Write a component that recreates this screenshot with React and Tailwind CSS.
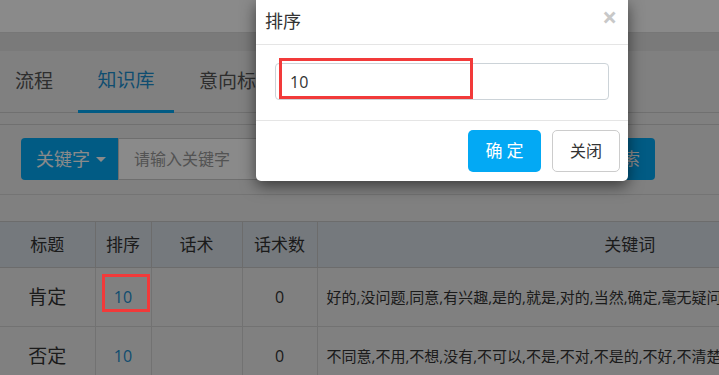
import React from 'react'

const cjk = { fontFamily: '"Open Sans", "Noto Sans CJK SC", sans-serif' }

const rows = [
  {
    title: '肯定',
    sort: 10,
    count: 0,
    words: '好的,没问题,同意,有兴趣,是的,就是,对的,当然,确定,毫无疑问,可以'
  },
  {
    title: '否定',
    sort: 10,
    count: 0,
    words: '不同意,不用,不想,没有,不可以,不是,不对,不是的,不好,不清楚,不需要'
  }
]

function Page() {
  return (
    <div className="w-[719px] h-[375px] bg-[#ededed] text-[#333]">
      <div className="h-[33px] bg-white border-b border-[#dcdcdc]" />
      <div className="h-[18px] bg-[#e2e2e2]" />

      <div className="flex h-[62px] border-b border-[#cfcfcf] text-[19px]">
        <div className="w-[78px] pl-[15px] flex items-center text-[#555]">流程</div>
        <div className="w-[96px] flex items-center justify-center text-[#1c8fcf] border-b-[3px] border-[#03a9f4] mb-[-1px]">
          知识库
        </div>
        <div className="pl-[25px] flex items-center text-[#555]">意向标签</div>
      </div>

      <div className="h-[12px] border-b border-[#cfcfcf]" />

      <div className="h-[70px] pt-[13px] border-b border-[#d6d6d6] pl-[21px]">
        <div className="flex h-[42px]">
          <div className="w-[97px] bg-[#03a9f4] text-white rounded-l-[4px] flex items-center pl-[15px] text-[18px]">
            关键字
            <span className="ml-[6px] w-0 h-0 border-l-[5px] border-r-[5px] border-t-[5px] border-l-transparent border-r-transparent border-t-white" />
          </div>
          <div className="w-[473px] bg-white border border-[#ccc] flex items-center pl-[15px] text-[16px] text-[#999]">
            请输入关键字
          </div>
          <div className="w-[64px] bg-[#03a9f4] text-white rounded-r-[4px] flex items-center justify-center text-[17px]">
            搜索
          </div>
        </div>
      </div>

      <div className="h-[26px]" />

      <table className="border-collapse table-fixed w-[943px]">
        <colgroup>
          <col className="w-[95px]" />
          <col className="w-[56px]" />
          <col className="w-[91px]" />
          <col className="w-[75px]" />
          <col />
        </colgroup>
        <thead>
          <tr className="h-[46px] bg-[#d8dfe7] text-[17px]">
            <th className="font-normal border-r border-y border-[#c8c8c8]">标题</th>
            <th className="font-normal border border-[#c8c8c8]">排序</th>
            <th className="font-normal border border-[#c8c8c8]">话术</th>
            <th className="font-normal border border-[#c8c8c8]">话术数</th>
            <th className="font-normal border border-[#c8c8c8]">关键词</th>
          </tr>
        </thead>
        <tbody>
          {rows.map((r) => (
            <tr key={r.title} className="h-[59px] bg-[#ededed] text-[16px]">
              <td className="text-center border-r border-b border-[#d2d2d2] text-[19px]">{r.title}</td>
              <td className="text-center border border-[#d2d2d2] text-[#1c8fcf]">{r.sort}</td>
              <td className="border border-[#d2d2d2]" />
              <td className="text-center border border-[#d2d2d2]">{r.count}</td>
              <td className="border border-[#d2d2d2] pl-[9px] text-[15px] whitespace-nowrap overflow-hidden">{r.words}</td>
            </tr>
          ))}
        </tbody>
      </table>
    </div>
  )
}

function SortModal() {
  return (
    <div className="absolute left-[256px] top-0 w-[372px] h-[181px] bg-white rounded-b-[5px] shadow-[0_5px_15px_rgba(0,0,0,0.55)]">
      <div className="h-[45px] border-b border-[#e5e5e5] flex items-center justify-between pl-[9px] pr-[11px]">
        <span className="text-[18px] text-[#333] mt-[-1px]">排序</span>
        <span className="text-[26px] font-bold text-[#c8c8c8] leading-none mt-[-10px]">×</span>
      </div>
      <div className="h-[76px] pt-[18px] px-[19px] border-b border-[#e5e5e5]">
        <div className="h-[37px] border border-[#ccd3d8] rounded-[4px] flex items-center pl-[14px] text-[16px] text-[#333]">
          10
        </div>
      </div>
      <div className="flex justify-end gap-[11px] pt-[9px] pr-[8px]">
        <button className="w-[73px] h-[42px] rounded-[5px] bg-[#03a9f4] text-white text-[17px] tracking-[4px] pl-[4px]">
          确定
        </button>
        <button className="w-[68px] h-[42px] rounded-[5px] bg-white border border-[#ccc] text-[#333] text-[16px]">
          关闭
        </button>
      </div>
    </div>
  )
}

export default function App() {
  return (
    <div className="relative w-[719px] h-[375px] overflow-hidden" style={cjk}>
      <Page />
      <div className="absolute inset-0 bg-black/[0.46]" />
      <SortModal />
      {/* annotation boxes */}
      <div className="absolute left-[279px] top-[58px] w-[194px] h-[41px] border-[3px] border-[#f23a3a]" />
      <div className="absolute left-[102px] top-[274px] w-[48px] h-[38px] border-[3px] border-[#f23a3a]" />
    </div>
  )
}
